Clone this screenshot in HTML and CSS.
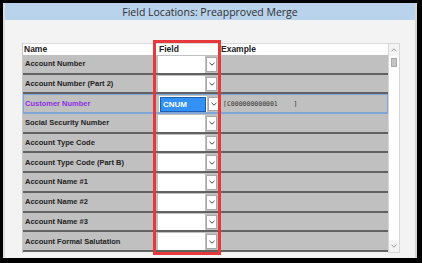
FILE: index.html
```html
<html>
<head>
<title>Field Locations: Preapproved Merge</title>
<link rel="stylesheet" href="styles.css">
</head>
<body>
<div class="frame">
<div class="window">
  <div class="titlebar">Field Locations: Preapproved Merge</div>
  <div class="content">
    <div class="gridwrap">
      <div class="table">
        <div class="hrow">
          <div class="hcell">Name</div>
          <div class="hcell hfield">Field</div>
          <div class="hcell">Example</div>
        </div>
        <div class="row">
          <div class="name">Account Number</div>
          <div class="field"><div class="input"></div><div class="drop"><svg width="6" height="4" viewBox="0 0 6 4"><path d="M0.5 0.8 L3 3.2 L5.5 0.8" fill="none" stroke="#444" stroke-width="1"/></svg></div></div>
          <div class="example"></div>
        </div>
        <div class="row">
          <div class="name">Account Number (Part 2)</div>
          <div class="field"><div class="input"></div><div class="drop"><svg width="6" height="4" viewBox="0 0 6 4"><path d="M0.5 0.8 L3 3.2 L5.5 0.8" fill="none" stroke="#444" stroke-width="1"/></svg></div></div>
          <div class="example"></div>
        </div>
        <div class="row selected">
          <div class="name">Customer Number</div>
          <div class="field"><div class="input"><span class="pick">CNUM</span></div><div class="drop"><svg width="6" height="4" viewBox="0 0 6 4"><path d="M0.5 0.8 L3 3.2 L5.5 0.8" fill="none" stroke="#444" stroke-width="1"/></svg></div></div>
          <div class="example">[C000000000001&nbsp;&nbsp;&nbsp;&nbsp;]</div>
        </div>
        <div class="row">
          <div class="name">Social Security Number</div>
          <div class="field"><div class="input"></div><div class="drop"><svg width="6" height="4" viewBox="0 0 6 4"><path d="M0.5 0.8 L3 3.2 L5.5 0.8" fill="none" stroke="#444" stroke-width="1"/></svg></div></div>
          <div class="example"></div>
        </div>
        <div class="row">
          <div class="name">Account Type Code</div>
          <div class="field"><div class="input"></div><div class="drop"><svg width="6" height="4" viewBox="0 0 6 4"><path d="M0.5 0.8 L3 3.2 L5.5 0.8" fill="none" stroke="#444" stroke-width="1"/></svg></div></div>
          <div class="example"></div>
        </div>
        <div class="row">
          <div class="name">Account Type Code (Part B)</div>
          <div class="field"><div class="input"></div><div class="drop"><svg width="6" height="4" viewBox="0 0 6 4"><path d="M0.5 0.8 L3 3.2 L5.5 0.8" fill="none" stroke="#444" stroke-width="1"/></svg></div></div>
          <div class="example"></div>
        </div>
        <div class="row">
          <div class="name">Account Name #1</div>
          <div class="field"><div class="input"></div><div class="drop"><svg width="6" height="4" viewBox="0 0 6 4"><path d="M0.5 0.8 L3 3.2 L5.5 0.8" fill="none" stroke="#444" stroke-width="1"/></svg></div></div>
          <div class="example"></div>
        </div>
        <div class="row">
          <div class="name">Account Name #2</div>
          <div class="field"><div class="input"></div><div class="drop"><svg width="6" height="4" viewBox="0 0 6 4"><path d="M0.5 0.8 L3 3.2 L5.5 0.8" fill="none" stroke="#444" stroke-width="1"/></svg></div></div>
          <div class="example"></div>
        </div>
        <div class="row">
          <div class="name">Account Name #3</div>
          <div class="field"><div class="input"></div><div class="drop"><svg width="6" height="4" viewBox="0 0 6 4"><path d="M0.5 0.8 L3 3.2 L5.5 0.8" fill="none" stroke="#444" stroke-width="1"/></svg></div></div>
          <div class="example"></div>
        </div>
        <div class="row">
          <div class="name">Account Formal Salutation</div>
          <div class="field"><div class="input"></div><div class="drop"><svg width="6" height="4" viewBox="0 0 6 4"><path d="M0.5 0.8 L3 3.2 L5.5 0.8" fill="none" stroke="#444" stroke-width="1"/></svg></div></div>
          <div class="example"></div>
        </div>
      </div>
      <div class="scrollbar">
        <div class="arrow"><svg width="6" height="4" viewBox="0 0 6 4"><path d="M0.5 3.2 L3 0.8 L5.5 3.2" fill="none" stroke="#999" stroke-width="1"/></svg></div>
        <div class="track"><div class="thumb"></div></div>
        <div class="arrow"><svg width="6" height="4" viewBox="0 0 6 4"><path d="M0.5 0.8 L3 3.2 L5.5 0.8" fill="none" stroke="#999" stroke-width="1"/></svg></div>
      </div>
      <div class="redbox"></div>
    </div>
  </div>
</div>
</div>
</body>
</html>
```
FILE: styles.css
```css
body { margin:0; background-color:#000; }
.frame { width:422px; height:263px; box-sizing:border-box; padding:3px 5px 5px 3px; }
.window { height:100%; display:flex; flex-direction:column; background-color:#f3f3f3; border-right:2px solid #d4d4d4; border-left:2px solid #dcdcdc; box-sizing:border-box; }
.titlebar { height:17px; flex:none; background-color:#bad3ec; color:#2e2e2e; font-family:"Open Sans", sans-serif; font-size:10.5px; display:flex; align-items:center; justify-content:center; }
.content { flex:1; padding:23px 0 0 17px; }
.gridwrap { position:relative; display:flex; width:378px; }
.table { width:366px; border-left:1px solid #c8c8c8; box-sizing:border-box; }
.hrow { display:grid; grid-template-columns:132px 65px 1fr; height:12px; background-color:#fff; border-top:1px solid #dadada; box-sizing:border-box; }
.hcell { font-family:"Liberation Sans", sans-serif; font-weight:bold; font-size:8.5px; color:#222; padding-left:1px; line-height:11px; }
.hcell.hfield { padding-left:4px; }
.row { display:grid; grid-template-columns:132px 65px 1fr; height:19.7px; background-color:#c0c0c0; border-bottom:2px solid #626262; box-sizing:border-box; }
.row.selected { border:1px solid #7fa6d6; border-bottom:2px solid #7fa6d6; }
.name { font-family:"Liberation Sans", sans-serif; font-weight:bold; font-size:7.5px; color:#222; padding-left:2px; display:flex; align-items:center; }
.selected .name { color:#8e2de2; padding-left:1px; }
.field { display:flex; padding:1px 3px 0 3px; }
.input { flex:1; background-color:#fff; display:flex; align-items:center; padding:0 1px; }
.pick { background-color:#3390f5; color:#fff; font-family:"Liberation Sans", sans-serif; font-weight:bold; font-size:8px; width:42px; height:13px; line-height:13px; padding-left:2px; border:1px solid #1a5fb4; }
.drop { width:9px; flex:none; background-color:#fff; border:1px solid #a8a8a8; margin:1px 0 1px 1px; display:flex; align-items:center; justify-content:center; }
.example { font-family:"DejaVu Sans Mono", monospace; font-size:6.5px; color:#333; padding-left:2px; display:flex; align-items:center; }
.scrollbar { width:12px; height:210px; background-color:#fff; border:1px solid #d6d6d6; box-sizing:border-box; display:flex; flex-direction:column; }
.arrow { height:12px; display:flex; align-items:center; justify-content:center; background-color:#f4f4f4; }
.track { flex:1; padding:2px 2px; }
.thumb { height:9px; background-color:#c4c4c4; border:1px solid #a9a9a9; box-sizing:border-box; }
.redbox { position:absolute; left:131px; top:-3px; width:68px; height:215px; border:3px solid #e5393c; box-sizing:border-box; }
```
